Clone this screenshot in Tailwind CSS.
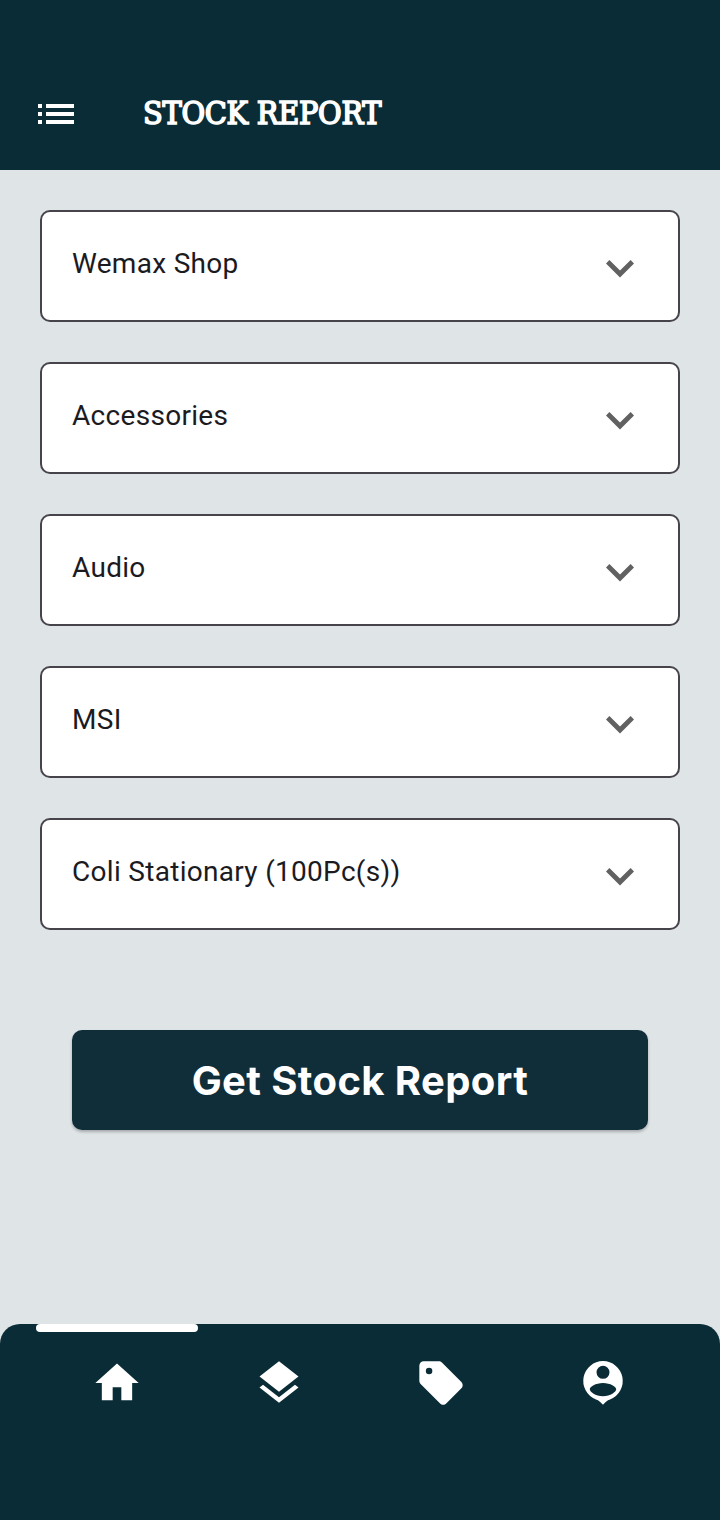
<!DOCTYPE html>
<html lang="en">
<head>
<meta charset="utf-8">
<title>Stock Report</title>
<script src="https://cdn.jsdelivr.net/npm/@tailwindcss/browser@4"></script>
</head>
<body class="flex h-[1520px] w-[720px] flex-col overflow-hidden bg-[#dfe4e7] font-['Roboto',sans-serif] text-[#1b1b1f]">
<header class="flex h-[170px] shrink-0 items-center bg-[#0a2c36] pt-[58px] pl-8 text-white">
  <svg class="size-12 shrink-0" viewBox="0 0 24 24" fill="currentColor"><path d="M3 13h2v-2H3v2zm0 4h2v-2H3v2zm0-8h2V7H3v2zm4 4h14v-2H7v2zm0 4h14v-2H7v2zM7 7v2h14V7H7z"/></svg>
  <h1 class="ml-[63px] -mt-0.5 text-[32px] leading-12 font-normal tracking-[-0.25px] whitespace-nowrap [font-family:'DejaVu_Serif_Condensed','DejaVu_Serif',serif] [font-stretch:condensed] [-webkit-text-stroke:1.6px_white]">STOCK REPORT</h1>
</header>
<main class="flex flex-1 flex-col gap-10 px-10 pt-10">
  <div class="flex h-28 items-center justify-between rounded-[10px] border-2 border-[#46434b] bg-white pr-[34px] pl-[30px] text-[28px] tracking-[0.3px]"><span class="-mt-1">Wemax Shop</span><svg class="mt-1 size-12" viewBox="0 0 48 48"><path fill="#616161" d="M10 19.400 13.400 16 24 26.600 34.600 16l3.400 3.400L24 33.400z"/></svg></div>
  <div class="flex h-28 items-center justify-between rounded-[10px] border-2 border-[#46434b] bg-white pr-[34px] pl-[30px] text-[28px] tracking-[0.3px]"><span class="-mt-1">Accessories</span><svg class="mt-1 size-12" viewBox="0 0 48 48"><path fill="#616161" d="M10 19.400 13.400 16 24 26.600 34.600 16l3.400 3.400L24 33.400z"/></svg></div>
  <div class="flex h-28 items-center justify-between rounded-[10px] border-2 border-[#46434b] bg-white pr-[34px] pl-[30px] text-[28px] tracking-[0.3px]"><span class="-mt-1">Audio</span><svg class="mt-1 size-12" viewBox="0 0 48 48"><path fill="#616161" d="M10 19.400 13.400 16 24 26.600 34.600 16l3.400 3.400L24 33.400z"/></svg></div>
  <div class="flex h-28 items-center justify-between rounded-[10px] border-2 border-[#46434b] bg-white pr-[34px] pl-[30px] text-[28px] tracking-[0.3px]"><span class="-mt-1">MSI</span><svg class="mt-1 size-12" viewBox="0 0 48 48"><path fill="#616161" d="M10 19.400 13.400 16 24 26.600 34.600 16l3.400 3.400L24 33.400z"/></svg></div>
  <div class="flex h-28 items-center justify-between rounded-[10px] border-2 border-[#46434b] bg-white pr-[34px] pl-[30px] text-[28px] tracking-[0.3px]"><span class="-mt-1">Coli Stationary (100Pc(s))</span><svg class="mt-1 size-12" viewBox="0 0 48 48"><path fill="#616161" d="M10 19.400 13.400 16 24 26.600 34.600 16l3.400 3.400L24 33.400z"/></svg></div>
  <button class="mx-8 mt-[60px] h-[100px] rounded-[10px] bg-[#0f2e3a] pt-0.5 text-[40px] font-bold tracking-[0.4px] text-white shadow-[0_2px_3px_rgba(0,0,0,0.25)] [font-family:Inter,sans-serif]">Get Stock Report</button>
</main>
<nav class="flex h-[196px] shrink-0 flex-col rounded-t-[20px] bg-[#0a2c36] px-9 text-white">
  <div class="h-2 w-[162px] rounded-full bg-white"></div>
  <div class="mt-[25px] grid grid-cols-4 justify-items-center">
    <svg class="size-[52px]" viewBox="0 0 24 24" fill="currentColor"><path d="M10 20v-6h4v6h5v-8h3L12 3 2 12h3v8z"/></svg>
    <svg class="size-[52px]" viewBox="0 0 24 24" fill="currentColor"><path d="m11.99 18.54-7.37-5.73L3 14.07l9 7 9-7-1.63-1.27-7.38 5.74zM12 16l7.36-5.73L21 9l-9-7-9 7 1.63 1.27L12 16z"/></svg>
    <svg class="size-[52px]" viewBox="0 0 24 24" fill="currentColor" fill-rule="evenodd"><path d="m21.41 11.58-9-9C12.05 2.22 11.55 2 11 2H4c-1.1 0-2 .9-2 2v7c0 .55.22 1.05.59 1.42l9 9c.36.36.86.58 1.41.58s1.05-.22 1.41-.59l7-7c.37-.36.59-.86.59-1.41s-.23-1.06-.59-1.42zM6.500 8a1.500 1.500 0 1 1 0-3 1.500 1.500 0 0 1 0 3z"/></svg>
    <svg class="size-[52px]" viewBox="0 0 52 52" fill="currentColor" fill-rule="evenodd"><path d="M26 4.100A19.800 19.800 0 0 0 18.500 42.200C21.500 43.200 22.500 44.200 26 47.700 29.500 44.200 30.500 43.200 33.500 42.200A19.800 19.800 0 0 0 26 4.100zM26 8.800a6.500 6.500 0 1 1 0 13 6.500 6.500 0 0 1 0-13zM26 26c7.500 0 13.200 3.800 13.200 6.300S33.500 39.300 26 39.300 12.800 34.800 12.800 32.300 18.500 26 26 26z"/></svg>
  </div>
</nav>
</body>
</html>
